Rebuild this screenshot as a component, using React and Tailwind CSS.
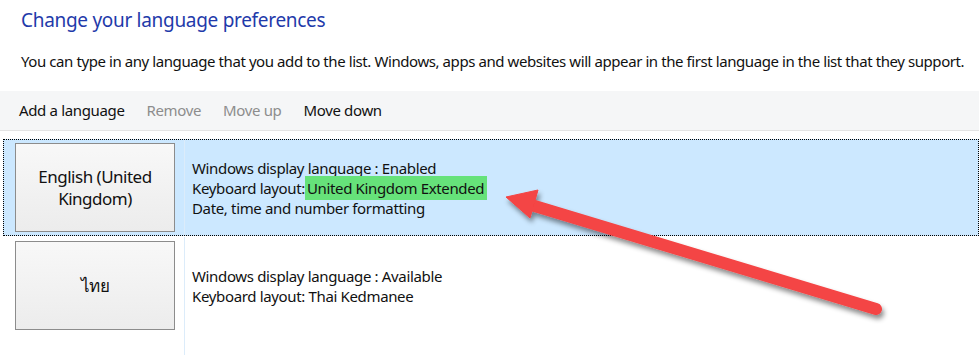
import React from 'react';

const font = { fontFamily: '"Noto Sans", "Open Sans", Arial, sans-serif' };

const LangButton = ({ children }) => (
  <div className="w-[160px] h-[89px] shrink-0 flex items-center justify-center text-center border border-[#8c8c8c] bg-gradient-to-b from-[#f8f8f8] to-[#ececec] text-[17px] leading-[22px] tracking-[-0.5px] text-[#111]">
    {children}
  </div>
);

const Arrow = () => (
  <svg className="absolute inset-0 pointer-events-none" width="979" height="355" viewBox="0 0 979 355">
    <defs>
      <filter id="sh" x="-10%" y="-30%" width="130%" height="180%">
        <feDropShadow dx="2" dy="4" stdDeviation="2.5" floodColor="#000" floodOpacity="0.45" />
      </filter>
    </defs>
    <g filter="url(#sh)" fill="#f44444" stroke="#f44444">
      <line x1="876" y1="309" x2="528" y2="204" strokeWidth="12" strokeLinecap="round" />
      <polygon points="506,197 538,190 530,218" strokeWidth="1" strokeLinejoin="round" />
    </g>
  </svg>
);

export default function App() {
  return (
    <div className="relative w-[979px] h-[355px] overflow-hidden bg-white tracking-[-0.35px]" style={font}>
      <h1 className="pl-[21px] pt-[6px] text-[19px] leading-[28px] tracking-[-0.3px] text-[#1f3aaa]">
        Change your language preferences
      </h1>
      <p className="pl-[21px] mt-[17px] text-[15px] leading-[20px] tracking-[-0.42px] text-[#111] whitespace-nowrap">
        You can type in any language that you add to the list. Windows, apps and websites will appear in the first language in the list that they support.
      </p>
      <div className="mt-[20px] h-[40px] bg-[#f5f6f7] border-b border-[#e3e3e3] flex items-center gap-[22px] pl-[19px] text-[15px]">
        <span className="text-[#111]">Add a language</span>
        <span className="text-[#8d8d8d]">Remove</span>
        <span className="text-[#8d8d8d]">Move up</span>
        <span className="text-[#111]">Move down</span>
      </div>
      <div className="mt-[8px] text-[15px] leading-[20px] text-[#111]">
        <div className="ml-[3px] flex border border-dotted border-black bg-[#cce8ff]">
          <div className="pl-[11px] pt-[3px] pb-[3px] pr-[9px]">
            <LangButton>
              English (United
              <br />
              Kingdom)
            </LangButton>
          </div>
          <div className="flex-1 border-l border-[#dcecfa] pl-[7px] flex flex-col justify-center">
            <div>Windows display language : Enabled</div>
            <div>
              Keyboard layout:
              <span className="inline-block bg-[#66e27a] leading-[24px] -my-[2px] pl-[2px] pr-[3px]">
                {' '}United Kingdom Extended
              </span>
            </div>
            <div>Date, time and number formatting</div>
          </div>
        </div>
        <div className="ml-[3px] flex border border-transparent h-[120px]">
          <div className="pl-[11px] pt-[4px] pr-[9px]">
            <LangButton>ไทย</LangButton>
          </div>
          <div className="flex-1 border-l border-[#dcecfa] pl-[7px] pt-[29px]">
            <div>Windows display language : Available</div>
            <div>Keyboard layout: Thai Kedmanee</div>
          </div>
        </div>
      </div>
      <Arrow />
    </div>
  );
}
